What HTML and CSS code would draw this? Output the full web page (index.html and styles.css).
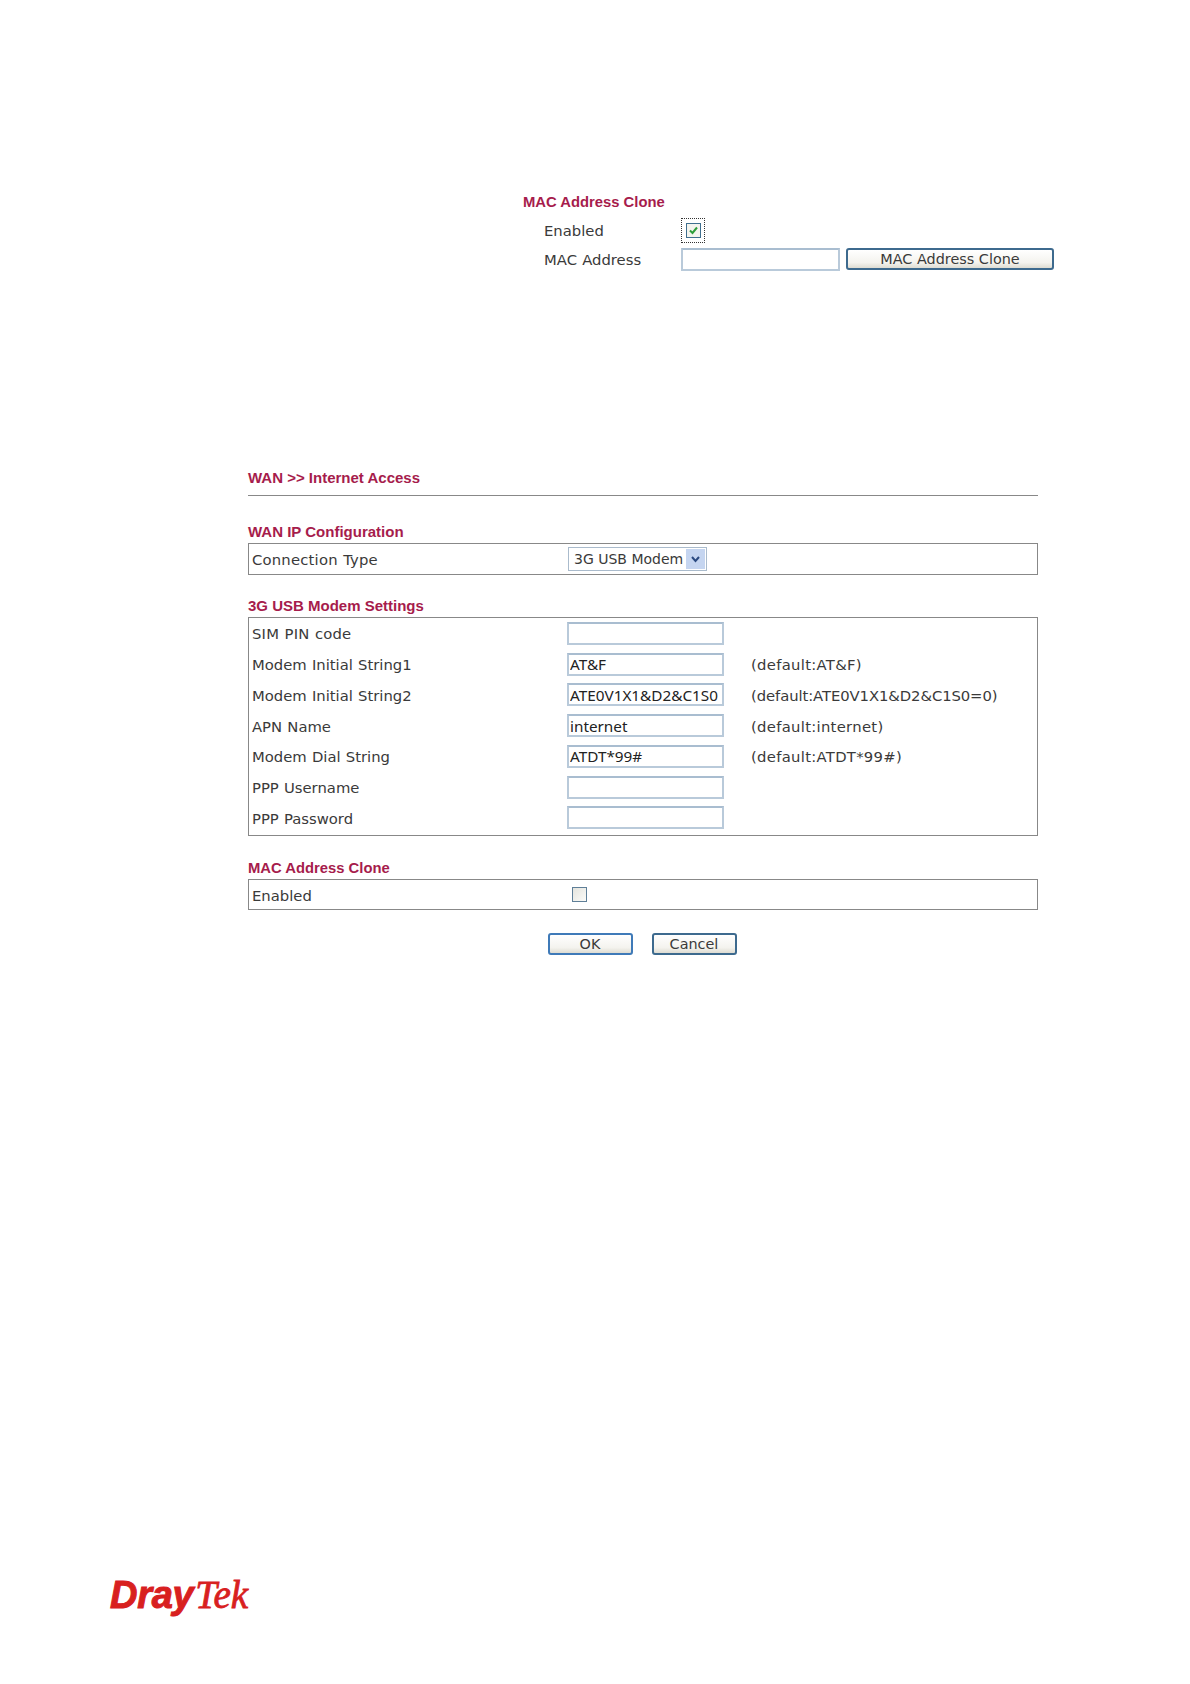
FILE: index.html
```html
<!DOCTYPE html>
<html lang="en">
<head>
<meta charset="utf-8">
<title>WAN Internet Access</title>
<link rel="stylesheet" href="styles.css">
</head>
<body>
<main class="page">
  <section class="clone">
    <h3 class="heading heading-mac">MAC Address Clone</h3>
    <div class="clone-row clone-row-check">
      <span class="clone-label">Enabled</span>
      <span class="focus-box">
        <span class="check">
          <svg width="11" height="11" viewBox="0 0 11 11"><path d="M2 5.5 L4.5 8 L9 2.5" fill="none" stroke="#2f9e3a" stroke-width="2"/></svg>
        </span>
      </span>
    </div>
    <div class="clone-row">
      <span class="clone-label">MAC Address</span>
      <input class="field field-mac" type="text">
      <button class="btn btn-clone" type="button">MAC Address Clone</button>
    </div>
  </section>

  <section class="wan">
    <h3 class="heading title">WAN &gt;&gt; Internet Access</h3>
    <hr class="rule">

    <h3 class="heading first">WAN IP Configuration</h3>
    <div class="box">
      <div class="row">
        <span class="label label-loose">Connection Type</span>
        <span class="select"><span class="select-text">3G USB Modem</span><span class="arrow"><svg width="11" height="9" viewBox="0 0 11 9"><path d="M2 2 L5.5 6 L9 2" fill="none" stroke="#2b4a80" stroke-width="2"/></svg></span></span>
      </div>
    </div>

    <h3 class="heading">3G USB Modem Settings</h3>
    <div class="box box-list">
      <div class="row row-tall"><span class="label label-loose">SIM PIN code</span><input class="field" type="text"></div>
      <div class="row row-tall"><span class="label">Modem Initial String1</span><input class="field" type="text" value="AT&amp;F"><span class="hint">(default:AT&amp;F)</span></div>
      <div class="row row-tall"><span class="label">Modem Initial String2</span><input class="field" type="text" value="ATE0V1X1&amp;D2&amp;C1S0"><span class="hint hint-long">(default:ATE0V1X1&amp;D2&amp;C1S0=0)</span></div>
      <div class="row row-tall"><span class="label">APN Name</span><input class="field" type="text" value="internet"><span class="hint">(default:internet)</span></div>
      <div class="row row-tall"><span class="label">Modem Dial String</span><input class="field" type="text" value="ATDT*99#"><span class="hint">(default:ATDT*99#)</span></div>
      <div class="row row-tall"><span class="label">PPP Username</span><input class="field" type="text"></div>
      <div class="row row-tall"><span class="label">PPP Password</span><input class="field" type="text"></div>
    </div>

    <h3 class="heading heading-mac heading-wan-mac">MAC Address Clone</h3>
    <div class="box">
      <div class="row row-short"><span class="label">Enabled</span><span class="check check-plain"></span></div>
    </div>

    <div class="actions">
      <button class="btn btn-default" type="button">OK</button>
      <button class="btn" type="button">Cancel</button>
    </div>
  </section>

  <footer class="logo"><span class="logo-dray">Dray</span><span class="logo-tek">Tek</span></footer>
</main>
</body>
</html>
```
FILE: styles.css
```css
html, body { margin: 0; padding: 0; background: #fff; }
.page {
  width: 1190px;
  height: 1684px;
  overflow: hidden;
  font-family: "DejaVu Sans", sans-serif;
  font-size: 14.8px;
  word-spacing: 0.5px;
  color: #3a3a3a;
  padding-top: 192px;
  box-sizing: border-box;
}
.heading {
  margin: 21px 0 1px;
  font-family: "Liberation Sans", sans-serif;
  font-size: 15px;
  font-weight: bold;
  line-height: 20px;
  word-spacing: 0;
  color: #a61c4c;
}
.heading-mac { font-size: 14.8px; }
.heading-wan-mac { margin-top: 22px; }
.clone { margin-left: 523px; }
.clone .heading { margin: 0 0 6px; }
.clone-row { display: flex; align-items: center; height: 23px; margin-top: 5px; }
.clone-row-check { height: 25px; margin-top: 0; }
.clone-label { width: 158px; flex: none; padding-left: 21px; box-sizing: border-box; }
.focus-box {
  width: 24px; height: 25px; flex: none;
  border: 1px dotted #333; box-sizing: border-box;
  display: flex; align-items: center; justify-content: center;
}
.check {
  width: 15px; height: 15px; flex: none; box-sizing: border-box;
  border: 1px solid #3f6f8f; background: #f4f4ee;
  display: flex; align-items: center; justify-content: center;
}
.check-plain { margin-left: 5px; border-color: #5f7f98; background: linear-gradient(135deg, #e4e4de, #fbfbf8); }
.field {
  width: 157px; height: 23px; flex: none; box-sizing: border-box;
  border: 2px solid #b9cada; border-top-color: #a9bdd0; background: #fff;
  padding: 0 0 0 1px; margin: 0;
  font-family: "Noto Sans", sans-serif; font-size: 15.3px; color: #222;
  outline: none;
}
.field-mac { width: 159px; }
.btn {
  width: 85px; height: 22px; flex: none; padding: 0; box-sizing: border-box;
  border: 2px solid #3d6a8e; border-radius: 3px;
  background: linear-gradient(#ffffff, #f4f3ee 70%, #dedcd2);
  font-family: "DejaVu Sans", sans-serif; font-size: 14.4px; color: #3a3a3a;
}
.btn-clone { width: 208px; margin-left: 6px; align-self: flex-start; }
.btn-default { border-color: #3f7ab8; }
.wan { margin: 197px 0 0 248px; width: 790px; }
.wan .title { margin: 0 0 7px; }
.rule { height: 1px; border: 0; margin: 0; background: #888; }
.wan .first { margin-top: 26px; }
.box { border: 1px solid #888; }
.box-list { padding-bottom: 2px; }
.row { display: flex; align-items: center; height: 30px; padding-left: 3px; }
.row-tall { height: 30.75px; }
.row-short { height: 29px; }
.label { width: 315px; flex: none; padding-top: 1px; }
.label-loose { letter-spacing: 0.2px; }
.hint { margin-left: 27px; padding-top: 1px; letter-spacing: 0.3px; }
.hint-long { letter-spacing: -0.08px; }
.select {
  display: flex; align-items: center; justify-content: space-between;
  width: 139px; height: 24px; flex: none; box-sizing: border-box; margin-left: 1px;
  border: 1px solid #aabbcc; padding: 0 1px 0 5px; white-space: nowrap; word-spacing: 0;
  font-size: 14px; letter-spacing: 0;
}
.arrow {
  width: 19px; height: 20px; flex: none; background: #c5d5f0;
  display: flex; align-items: center; justify-content: center;
}
.actions { display: flex; justify-content: center; gap: 19px; margin: 23px 2px 0 0; }
.logo {
  margin: 618px 0 0 110px;
  height: 44px; line-height: 44px;
  color: #d8201f;
  white-space: nowrap;
  word-spacing: 0;
}
.logo-dray { font-family: "Liberation Sans", sans-serif; font-weight: bold; font-style: italic; font-size: 38px; letter-spacing: -0.3px; -webkit-text-stroke: 1px #d8201f; }
.logo-tek { font-family: "Liberation Serif", serif; font-style: italic; font-size: 39px; margin-left: 2px; -webkit-text-stroke: 0.8px #d8201f; }
```
